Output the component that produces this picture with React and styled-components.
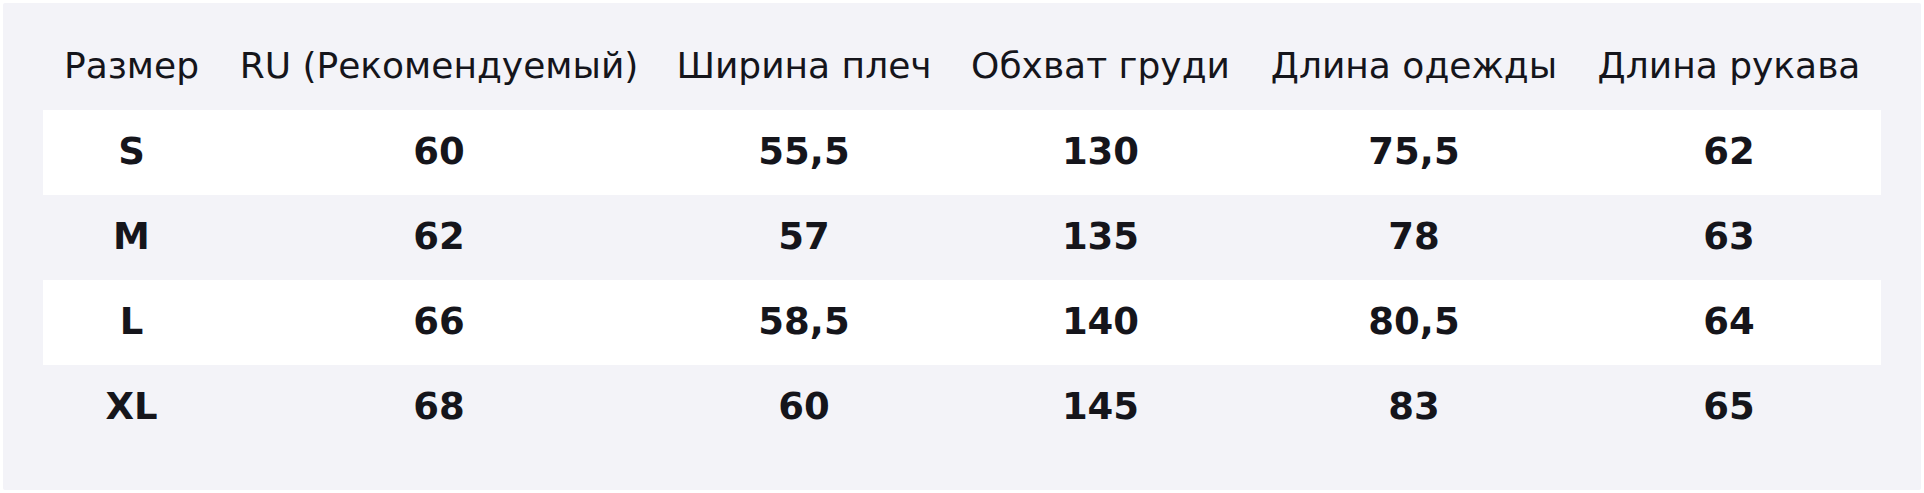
import React from 'react'
import styled, { createGlobalStyle } from 'styled-components'

const GlobalStyle = createGlobalStyle`
  html, body {
    margin: 0;
    padding: 0;
    background: #ffffff;
  }
  body {
    font-family: "DejaVu Sans", "Liberation Sans", sans-serif;
    color: #15151b;
  }
`;

const columns = [
  'Размер',
  'RU (Рекомендуемый)',
  'Ширина плеч',
  'Обхват груди',
  'Длина одежды',
  'Длина рукава',
];

const rows = [
  ['S', '60', '55,5', '130', '75,5', '62'],
  ['M', '62', '57', '135', '78', '63'],
  ['L', '66', '58,5', '140', '80,5', '64'],
  ['XL', '68', '60', '145', '83', '65'],
];

const App = () => {
  return (
    <>
      <GlobalStyle />
      <Panel>
        <Table>
          <Row>
            {columns.map((c) => (
              <HeadCell key={c}>{c}</HeadCell>
            ))}
          </Row>
          {rows.map((r, i) => (
            <Row key={r[0]} $striped={i % 2 === 0}>
              {r.map((v, j) => (
                <Cell key={j}>{v}</Cell>
              ))}
            </Row>
          ))}
        </Table>
      </Panel>
    </>
  )
}

const Panel = styled.div`
  margin: 3px;
  width: 1918px;
  box-sizing: border-box;
  padding: 40px;
  background: #f3f3f8;
  border-radius: 2px;
`;

const Table = styled.div`
  display: flex;
  flex-direction: column;
`;

const Row = styled.div`
  display: grid;
  grid-template-columns: 177px 438px 292px 301px 326px 304px;
  background: ${(p) => (p.$striped ? '#ffffff' : 'transparent')};
`;

const HeadCell = styled.div`
  padding: 2px 0 23px;
  text-align: center;
  font-size: 36px;
  font-weight: 400;
  line-height: 42px;
  white-space: nowrap;
`;

const Cell = styled.div`
  height: 85px;
  padding-bottom: 2px;
  box-sizing: border-box;
  display: flex;
  align-items: center;
  justify-content: center;
  font-size: 37px;
  font-weight: 700;
`;

export default App
